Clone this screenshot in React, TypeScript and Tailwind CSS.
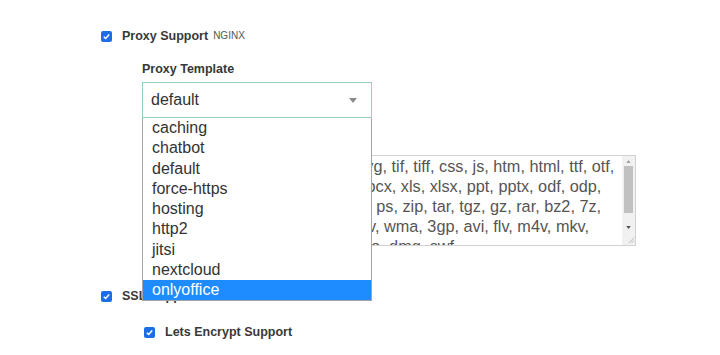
import React from "react";

const TEMPLATES = [
  "caching",
  "chatbot",
  "default",
  "force-https",
  "hosting",
  "http2",
  "jitsi",
  "nextcloud",
  "onlyoffice",
];

const EXT_LINES = [
  "jpeg, jpg, png, gif, bmp, ico, svg, tif, tiff, css, js, htm, html, ttf, otf,",
  "webp, woff, txt, csv, rtf, doc, docx, xls, xlsx, ppt, pptx, odf, odp,",
  "ods, odt, pdf, psd, ai, eot, eps, ps, zip, tar, tgz, gz, rar, bz2, 7z,",
  "aac, m4a, mp3, mp4, ogg, wav, wma, 3gp, avi, flv, m4v, mkv,",
  "mov, mpeg, mpg, wmv, exe, iso, dmg, swf",
];

function Check() {
  return (
    <span className="w-[11px] h-[11px] rounded-[2px] bg-[#1d6ee6] flex items-center justify-center shrink-0">
      <svg viewBox="0 0 10 10" className="w-[9px] h-[9px]">
        <path d="M2 5.2 L4.1 7.2 L8 2.8" fill="none" stroke="white" strokeWidth="1.7" />
      </svg>
    </span>
  );
}

function CheckRow({ label, extra }: { label: string; extra?: string }) {
  return (
    <div className="flex items-center h-[14px] gap-[10px]">
      <Check />
      <span className="text-[12.5px] font-bold text-[#383838] leading-none">{label}</span>
      {extra && <span className="text-[10px] text-[#555] -ml-[5px] leading-none">{extra}</span>}
    </div>
  );
}

export default function App() {
  return (
    <div className="w-[720px] h-[355px] bg-white overflow-hidden font-['Liberation_Sans',Arial,sans-serif]">
      <div className="pl-[101px] pt-[29px]">
        <CheckRow label="Proxy Support" extra="NGINX" />

        <div className="pl-[41px] pt-[19px]">
          <div className="text-[12.5px] font-bold text-[#383838] leading-[15px]">Proxy Template</div>

          {/* select with open list */}
          <div className="relative mt-[5px] w-[230px] z-20">
            <div className="h-[36px] border border-[#95cfc0] bg-white flex items-center pl-[8px] pr-[14px] justify-between">
              <span className="text-[16px] text-[#333]">default</span>
              <svg viewBox="0 0 8 5" className="w-[8px] h-[5px]">
                <path d="M0 0 L8 0 L4 5 Z" fill="#8a8a8a" />
              </svg>
            </div>
            <ul className="absolute top-full left-0 w-full bg-white border border-[#a5a5a5] border-t-0">
              {TEMPLATES.map((t) => (
                <li
                  key={t}
                  className={`h-[20.25px] leading-[20.25px] pl-[9px] text-[16px] ${
                    t === "onlyoffice" ? "bg-[#1e8cff] text-white" : "text-[#333]"
                  }`}
                >
                  {t}
                </li>
              ))}
            </ul>
          </div>

          <div className="mt-[12px] mb-[10px] text-[12.5px] font-bold text-[#383838] leading-[15px]">Proxy Extensions</div>

          {/* extensions textarea */}
          <div className="relative w-[494px] h-[91px] border border-[#d2d2d2] overflow-hidden">
            <div className="pl-[11px] pt-0 text-[16.25px] leading-[20px] text-[#555] whitespace-pre">
              {EXT_LINES.map((l) => (
                <div key={l}>{l}</div>
              ))}
            </div>
            <div className="absolute right-0 top-0 bottom-0 w-[13px] bg-[#f1f1f1] flex flex-col items-center">
              <svg viewBox="0 0 6 4" className="w-[5px] h-[3px] mt-[4px]">
                <path d="M0 4 L6 4 L3 0 Z" fill="#a3a3a3" />
              </svg>
              <div className="mt-[3px] w-[9px] h-[47px] bg-[#c1c1c1]" />
              <svg viewBox="0 0 6 4" className="w-[5px] h-[3px] mt-[13px]">
                <path d="M0 0 L6 0 L3 4 Z" fill="#505050" />
              </svg>
              <svg viewBox="0 0 10 10" className="w-[9px] h-[9px] mt-auto mb-[1px] self-end">
                <path d="M9 3 L3 9 M9 6 L6 9" stroke="#b5b5b5" strokeWidth="1" />
              </svg>
            </div>
          </div>
        </div>

        <div className="mt-[43px]">
          <CheckRow label="SSL Support" />
        </div>
        <div className="pl-[43px] mt-[22px]">
          <CheckRow label="Lets Encrypt Support" />
        </div>
      </div>
    </div>
  );
}
